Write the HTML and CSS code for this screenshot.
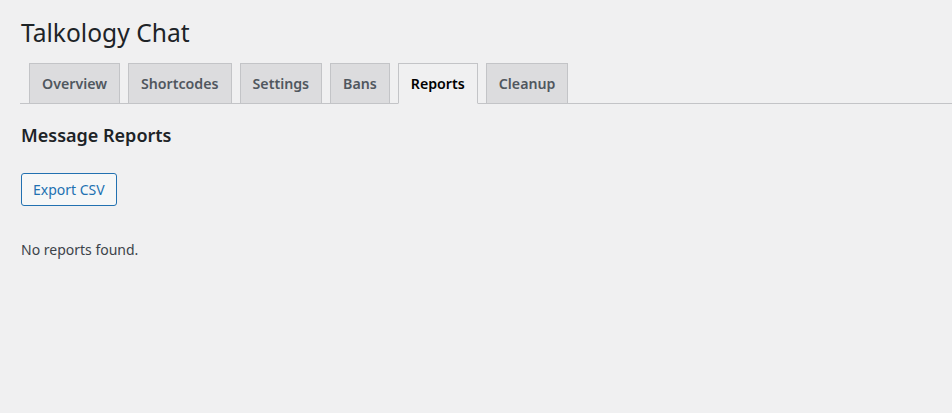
FILE: index.html
```html
<!DOCTYPE html>
<html>
<head>
<meta charset="utf-8">
<link rel="stylesheet" href="styles.css">
</head>
<body>
<div class="wrap">
  <h1 class="title">Talkology Chat</h1>
  <nav class="tabs">
    <a class="tab">Overview</a>
    <a class="tab">Shortcodes</a>
    <a class="tab">Settings</a>
    <a class="tab">Bans</a>
    <a class="tab active">Reports</a>
    <a class="tab">Cleanup</a>
  </nav>
  <h2 class="section">Message Reports</h2>
  <button class="btn">Export CSV</button>
  <p class="empty">No reports found.</p>
</div>
</body>
</html>
```
FILE: styles.css
```css
html, body {
  margin: 0;
  padding: 0;
  background: #f0f0f1;
  height: 100%;
}
body {
  font-family: "Noto Sans", "Open Sans", sans-serif;
  color: #3c434a;
  font-size: 13px;
}
.wrap {
  padding: 0 0 0 20px;
}
.title {
  margin: 0;
  padding: 16px 0 0 1px;
  font-size: 24.6px;
  font-weight: 400;
  line-height: 33px;
  color: #1d2327;
}
.tabs {
  display: flex;
  gap: 8px;
  margin-top: 14px;
  padding-left: 9px;
  border-bottom: 1px solid #c3c4c7;
}
.tab {
  box-sizing: border-box;
  height: 41px;
  margin-bottom: -1px;
  padding: 0 12px;
  display: flex;
  align-items: center;
  border: 1px solid #c3c4c7;
  background: #dcdcde;
  color: #50575e;
  font-size: 14.2px;
  font-weight: 600;
}
.tab.active {
  background: #f0f0f1;
  border-bottom-color: #f0f0f1;
  color: #000;
}
.section {
  margin: 19px 0 0 1px;
  font-size: 18px;
  font-weight: 600;
  line-height: 24px;
  color: #1d2327;
}
.btn {
  display: block;
  box-sizing: border-box;
  margin: 26px 0 0 1px;
  height: 33px;
  padding: 0 11px;
  border: 1px solid #2271b1;
  border-radius: 3px;
  background: #f6f7f7;
  color: #2271b1;
  font-family: inherit;
  font-size: 14px;
}
.empty {
  margin: 33px 0 0 1px;
  font-size: 14px;
  line-height: 22px;
}
```
